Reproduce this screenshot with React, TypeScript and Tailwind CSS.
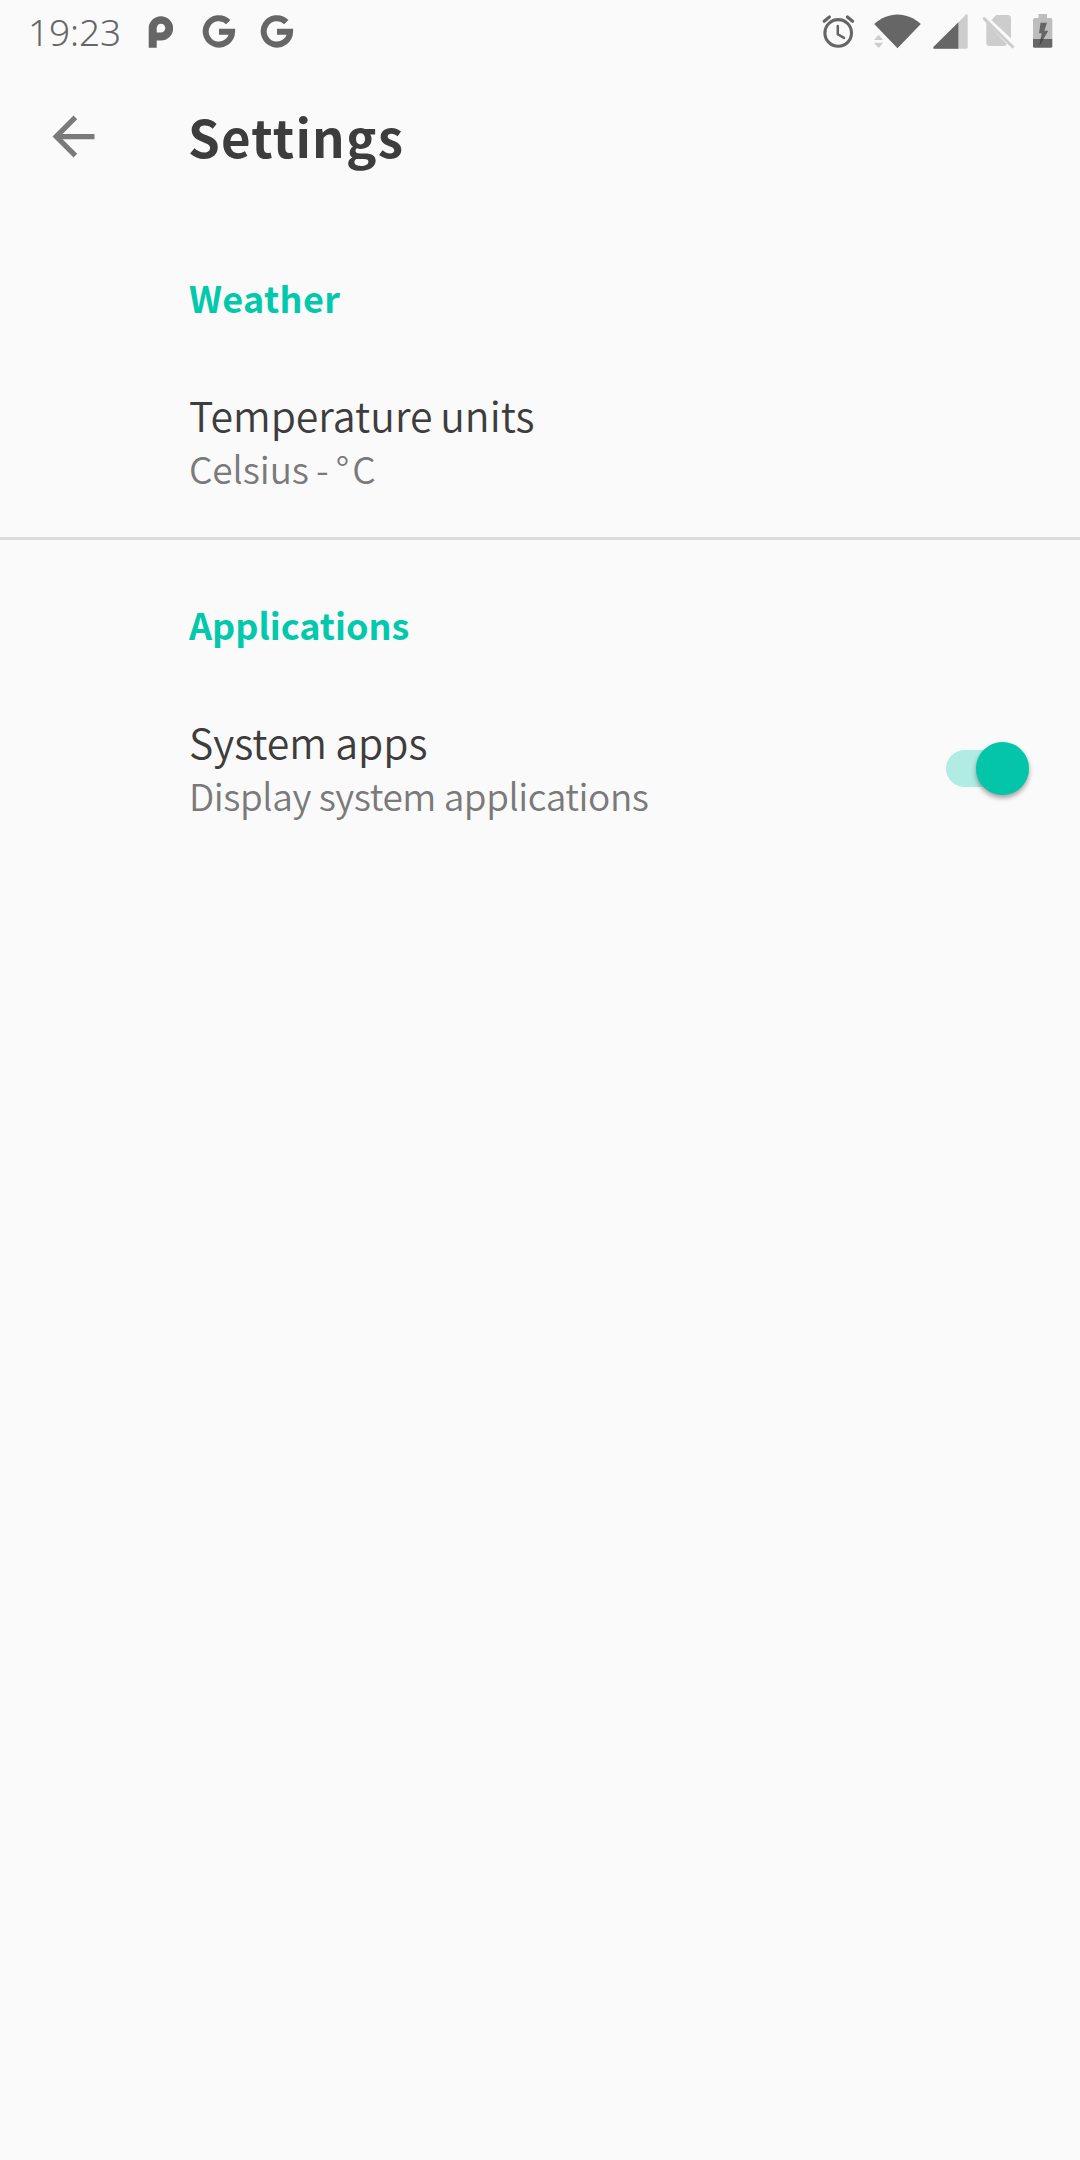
import type { ReactNode } from "react";

function GoogleIcon({ className }: { className: string }) {
  return (
    <svg className={className} width="34" height="60" viewBox="202 0 34 60" fill="none" stroke="#666666" strokeWidth="6">
      <path d="M228.3 22.1A13.2 13.2 0 1 0 232.1 31.7H219" />
    </svg>
  );
}

function StatusBar() {
  return (
    <div className="flex h-[60px] w-full items-start">
      <span className="ml-[28px] w-[96px] whitespace-nowrap font-['Noto_Sans',sans-serif] text-[37px] leading-[63px] font-light tracking-[-0.1px] text-[#666666]">
        19:23
      </span>
      <svg className="ml-[23px]" width="28" height="60" viewBox="147 0 28 60" fill="#666666">
        <path fillRule="evenodd" d="M148.7 47.8V28.4a12.2 12.2 0 0 1 24.4 0A12.2 12.2 0 0 1 160.9 40.6H156.7V47.8ZM156.7 32.6V28.1a4.3 4.3 0 0 1 8.6 0a4.5 4.5 0 0 1 -4.5 4.5Z" />
      </svg>
      <GoogleIcon className="ml-[27px]" />
      <GoogleIcon className="ml-[24px]" />

      <svg className="ml-auto" width="36" height="60" viewBox="820 0 36 60" fill="none" stroke="#666666" strokeLinecap="round">
        <circle cx="838.2" cy="32.9" r="13.3" strokeWidth="3.1" />
        <path d="M837.8 26V34.2L844 37.9" strokeWidth="2.5" />
        <path d="M824.2 21.3L829.4 17M852.6 21.3L847.4 17" strokeWidth="3.2" />
      </svg>
      <svg className="ml-[17px]" width="49" height="60" viewBox="873 0 49 60">
        <path fill="#666666" d="M874.2 24C881 18 889 14.5 897.5 14.5S914 18 920.8 24L897.5 48.2Z" />
        <path fill="#cdcdcd" d="M878.6 34.8L883.2 40H874ZM878.6 48L883.2 42.8H874Z" />
      </svg>
      <svg className="ml-[10px]" width="37" height="60" viewBox="932 0 37 60">
        <path fill="#cdcdcd" d="M933 48.8L966 14.6Q967.7 13.4 967.7 15.5V47.3Q967.7 48.8 966.2 48.8Z" />
        <path fill="#666666" d="M958.4 22.2V48.8H934Q932.4 48.2 933.6 46.8Z" />
      </svg>
      <svg className="ml-[13px]" width="34" height="60" viewBox="982 0 34 60" fill="#cdcdcd">
        <path d="M991.4 20L996.2 15.1H1008Q1011 15.1 1011 18V38.6Z" />
        <path d="M986.3 22.5L1007 44.3Q1006 45.9 1004 45.9H989.5Q986.3 45.9 986.3 42.7Z" />
        <path d="M984.2 18.6L1012.6 46.8" stroke="#cdcdcd" strokeWidth="3" strokeLinecap="round" />
      </svg>
      <svg className="mr-[27px] ml-[16px]" width="21" height="60" viewBox="1032 0 21 60">
        <path fill="#bdbdbd" d="M1038.5 14H1047V18H1050.6Q1052.3 18 1052.3 19.7V39H1033V19.7Q1033 18 1034.7 18H1038.5Z" />
        <path fill="#666666" d="M1033 39H1052.3V46.2Q1052.3 47.8 1050.6 47.8H1034.7Q1033 47.8 1033 46.2Z" />
        <path fill="#666666" d="M1040.5 22.8H1047L1044.3 30.7H1048.3L1043.5 39H1040.5L1041.7 33.3H1039Z" />
        <path fill="#444444" d="M1040.5 39H1043.5L1039.2 46.2Z" />
      </svg>
    </div>
  );
}

function Toolbar() {
  return (
    <header className="flex h-[150px] items-center">
      <button className="mt-[2px] ml-[42px] size-[63px]" aria-label="Back">
        <svg width="63" height="63" viewBox="0 0 24 24" fill="#7a7a7a">
          <path d="M20 11H7.83l5.59-5.59L12 4l-8 8 8 8 1.41-1.41L7.83 13H20v-2z" />
        </svg>
      </button>
      <h1 className="mt-[2px] ml-[83px] text-[51px] leading-[76px] font-bold tracking-[1.2px] text-[#3d3d3d]">Settings</h1>
    </header>
  );
}

function Category({ children }: { children: ReactNode }) {
  return <h2 className="mb-[63px] text-[36px] leading-[54px] font-bold text-[#02c8ac]">{children}</h2>;
}

function Toggle() {
  return (
    <button role="switch" aria-checked="true" aria-label="System apps" className="flex h-[53px] w-[83px] items-center">
      <span className="flex h-[37px] w-full items-center justify-end rounded-full bg-[#b0ece3]">
        <span className="size-[53px] shrink-0 rounded-full bg-[#03c5aa] shadow-[0_3px_5px_rgba(0,0,0,0.36)]" />
      </span>
    </button>
  );
}

export default function App() {
  return (
    <main className="flex h-[2160px] w-[1080px] flex-col overflow-hidden bg-[#fafafa] font-['Noto_Sans_CJK_SC',sans-serif]">
      <StatusBar />
      <Toolbar />
      <section className="border-b-[3px] border-[#dbdbdb] pt-[60px] pb-[42px] pl-[189px]">
        <Category>
          <span className="tracking-[0.35px]">Weather</span>
        </Category>
        <p className="text-[41px] leading-[54px] font-[350] [word-spacing:-1.5px] text-[#3d3d3d]">Temperature units</p>
        <p className="text-[37px] leading-[54px] font-[350] tracking-[-0.1px] [word-spacing:-1px] text-[#7a7a7a]">
          Celsius - <span className="tracking-[3px]">°C</span>
        </p>
      </section>
      <section className="pt-[57px] pr-[51px] pl-[189px]">
        <Category>Applications</Category>
        <div className="flex items-center justify-between">
          <div>
            <p className="text-[41px] leading-[54px] font-[350] [word-spacing:-1px] text-[#3d3d3d]">System apps</p>
            <p className="text-[37px] leading-[54px] font-[350] tracking-[-0.45px] text-[#7a7a7a]">Display system applications</p>
          </div>
          <Toggle />
        </div>
      </section>
    </main>
  );
}
